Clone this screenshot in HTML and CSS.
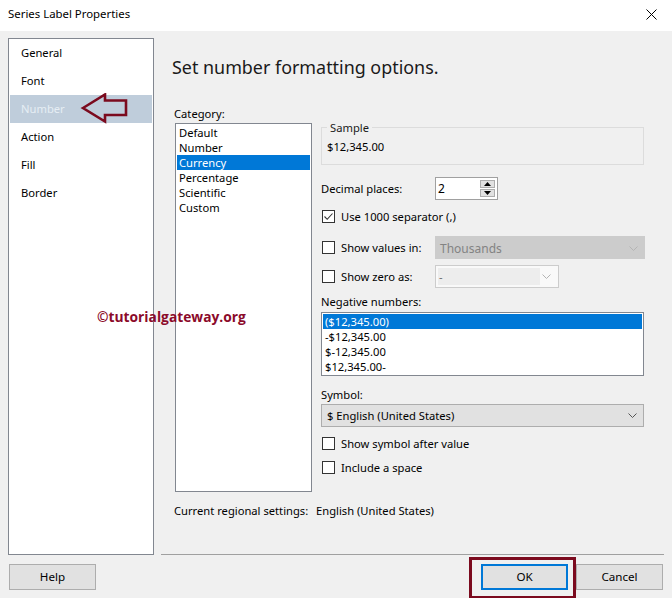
FILE: index.html
```html
<!DOCTYPE html>
<html>
<head>
<meta charset="utf-8">
<link rel="stylesheet" href="styles.css">
</head>
<body>
<div class="window">
  <div class="titlebar">
    <span class="title">Series Label Properties</span>
    <svg class="close" width="11" height="11" viewBox="0 0 11 11"><path d="M0.5 0.5 L10.5 10.5 M10.5 0.5 L0.5 10.5" stroke="#000" stroke-width="1" fill="none"/></svg>
  </div>
  <div class="client">
    <div class="main">
      <nav class="nav">
        <div class="nav-item">General</div>
        <div class="nav-item">Font</div>
        <div class="nav-item selected">Number</div>
        <div class="nav-item">Action</div>
        <div class="nav-item">Fill</div>
        <div class="nav-item">Border</div>
      </nav>
      <section class="page">
        <h1 class="heading">Set number formatting options.</h1>
        <div class="cols">
          <div class="cat-col">
            <div class="lbl">Category:</div>
            <ul class="listbox cat-list">
              <li>Default</li>
              <li>Number</li>
              <li class="sel">Currency</li>
              <li>Percentage</li>
              <li>Scientific</li>
              <li>Custom</li>
            </ul>
          </div>
          <div class="opt-col">
            <fieldset class="sample">
              <legend>Sample</legend>
              <div class="sample-val">$12,345.00</div>
            </fieldset>
            <div class="row dec-row">
              <span class="row-lbl">Decimal places:</span>
              <div class="spin">
                <span class="spin-val">2</span>
                <div class="spin-btns">
                  <div class="spin-btn"><svg width="7" height="4" viewBox="0 0 7 4"><path d="M0 4 L3.5 0 L7 4 Z" fill="#000"/></svg></div>
                  <div class="spin-btn"><svg width="7" height="4" viewBox="0 0 7 4"><path d="M0 0 L7 0 L3.5 4 Z" fill="#000"/></svg></div>
                </div>
              </div>
            </div>
            <div class="row chk-row sep-row">
              <span class="chk"><svg width="11" height="11" viewBox="0 0 11 11"><path d="M1.5 5.5 L4.2 8.3 L9.5 2.5" stroke="#333" stroke-width="1.1" fill="none"/></svg></span>
              <span>Use 1000 separator (,)</span>
            </div>
            <div class="row combo-row vals-row">
              <span class="row-lbl chk-lbl"><span class="chk"></span><span>Show values in:</span></span>
              <div class="combo disabled wide">
                <span>Thousands</span>
                <svg class="chev" width="9" height="5" viewBox="0 0 9 5"><path d="M0.5 0.5 L4.5 4.5 L8.5 0.5" stroke="#b4b4b4" fill="none"/></svg>
              </div>
            </div>
            <div class="row combo-row zero-row">
              <span class="row-lbl chk-lbl"><span class="chk"></span><span>Show zero as:</span></span>
              <div class="combo editable">
                <span class="edit-area">-</span>
                <svg class="chev" width="9" height="5" viewBox="0 0 9 5"><path d="M0.5 0.5 L4.5 4.5 L8.5 0.5" stroke="#b4b4b4" fill="none"/></svg>
              </div>
            </div>
            <div class="lbl neg-lbl">Negative numbers:</div>
            <ul class="listbox neg-list">
              <li class="sel">($12,345.00)</li>
              <li>-$12,345.00</li>
              <li>$-12,345.00</li>
              <li>$12,345.00-</li>
            </ul>
            <div class="lbl sym-lbl">Symbol:</div>
            <div class="combo symbol">
              <span>$ English (United States)</span>
              <svg class="chev" width="9" height="5" viewBox="0 0 9 5"><path d="M0.5 0.5 L4.5 4.5 L8.5 0.5" stroke="#555" fill="none"/></svg>
            </div>
            <div class="row chk-row after-row">
              <span class="chk"></span>
              <span>Show symbol after value</span>
            </div>
            <div class="row chk-row space-row">
              <span class="chk"></span>
              <span>Include a space</span>
            </div>
          </div>
        </div>
        <div class="regional">
          <span class="reg-lbl">Current regional settings:</span>
          <span>English (United States)</span>
        </div>
      </section>
    </div>
    <div class="footer">
      <button class="btn help">Help</button>
      <div class="footer-right">
        <button class="btn ok">OK</button>
        <button class="btn cancel">Cancel</button>
      </div>
      <div class="ok-mark"></div>
    </div>
  </div>
  <svg class="arrow" width="50" height="34" viewBox="0 0 50 34">
    <path d="M3 15 L25 1.5 L25 7.5 L46 7.5 L46 22 L25 22 L25 28.5 Z" fill="none" stroke="#7b0a1e" stroke-width="2.6" stroke-linejoin="miter"/>
  </svg>
  <div class="watermark">©tutorialgateway.org</div>
</div>
</body>
</html>
```
FILE: styles.css
```css
* { box-sizing: border-box; }
html, body { margin: 0; padding: 0; }
body {
  font-family: "Noto Sans", "Open Sans", sans-serif;
  font-size: 11.2px;
  color: #000;
  background: #f0f0f0;
}
.window {
  position: relative;
  width: 672px;
  height: 598px;
  overflow: hidden;
}
.titlebar {
  height: 31px;
  background: #fff;
  display: flex;
  justify-content: space-between;
  align-items: flex-start;
  padding: 6px 15px 0 8px;
  line-height: 16px;
}
.title { font-size: 11.4px; }
.close { margin-top: 3px; }
.client {
  height: 567px;
  background: #f0f0f0;
  position: relative;
}
.main {
  display: flex;
  padding: 7px 0 0 8px;
}
.nav {
  width: 146px;
  height: 517px;
  background: #fff;
  border: 1px solid #828790;
  padding: 0 1px;
}
.nav-item {
  height: 28px;
  line-height: 28px;
  padding-left: 11px;
}
.nav-item.selected {
  background: #bfcddb;
  color: #e6edf4;
}
.page {
  margin-left: 7px;
  width: 503px;
  height: 517px;
  border-bottom: 1px solid #a0a0a0;
  display: flex;
  flex-direction: column;
}
.heading {
  margin: 17px 0 0 11px;
  font-size: 17.9px;
  font-weight: normal;
  line-height: 24px;
  height: 24px;
  color: #1a1a1a;
}
.cols {
  display: flex;
  margin-top: 27px;
  padding-left: 13px;
}
.lbl { line-height: 15px; height: 15px; }
.cat-col { width: 137px; }
.listbox {
  list-style: none;
  margin: 0;
  background: #fff;
  border: 1px solid #828790;
  padding: 1px;
}
.listbox li {
  height: 15px;
  line-height: 15px;
  padding-left: 2px;
  white-space: nowrap;
}
.listbox li.sel {
  background: #0078d7;
  color: #fff;
}
.cat-list {
  margin: 2px 0 0 1px;
  width: 137px;
  height: 369px;
}
.opt-col {
  margin-left: 10px;
  width: 324px;
  display: flex;
  flex-direction: column;
}
.sample {
  margin: 14px 0 0 0;
  width: 323px;
  border: 1px solid #dcdcdc;
  padding: 0 0 10px 5px;
  min-inline-size: 0;
}
.sample legend {
  padding: 0 3px;
  line-height: 15px;
  color: #1a1a1a;
}
.sample-val {
  margin-top: 4px;
  line-height: 15px;
  height: 15px;
}
.row {
  display: flex;
  align-items: center;
}
.row-lbl { width: 114px; }
.dec-row { margin-top: 12px; height: 23px; }
.spin {
  width: 63px;
  height: 23px;
  background: #fff;
  border: 1px solid #a0a0a0;
  display: flex;
  align-items: center;
  justify-content: space-between;
  padding: 0 2px 0 2px;
  font-size: 12px;
}
.spin-btns {
  display: flex;
  flex-direction: column;
  gap: 1px;
}
.spin-btn {
  width: 15px;
  height: 8px;
  background: #e1e1e1;
  border: 1px solid #adadad;
  display: flex;
  align-items: center;
  justify-content: center;
}
.chk {
  width: 13px;
  height: 13px;
  border: 1px solid #333;
  background: #fff;
  display: inline-flex;
  align-items: center;
  justify-content: center;
  flex: none;
}
.chk-row { height: 13px; gap: 6px; margin-left: 1px; }
.chk-lbl { display: flex; align-items: center; gap: 6px; padding-left: 1px; }
.sep-row { margin-top: 10px; }
.combo-row { height: 23px; }
.vals-row { margin-top: 13px; }
.zero-row { margin-top: 6px; }
.combo {
  height: 23px;
  display: flex;
  align-items: center;
  justify-content: space-between;
  padding: 0 6px 0 4px;
}
.combo.disabled {
  width: 210px;
  background: #cccccc;
  border: 1px solid #cccccc;
  color: #838383;
  font-size: 12px;
  padding-top: 1px;
}
.combo.editable {
  width: 124px;
  background: #f9f9f9;
  border: 1px solid #cccccc;
  padding: 2px 7px 2px 2px;
}
.edit-area {
  width: 102px;
  height: 17px;
  background: #ededed;
  line-height: 17px;
  padding-left: 1px;
  color: #6d6d6d;
}
.neg-lbl { margin-top: 6px; }
.neg-list {
  margin: 3px 0 0 0;
  width: 323px;
  height: 64px;
}
.sym-lbl { margin-top: 11px; }
.combo.symbol {
  margin: 2px 0 0 0;
  width: 323px;
  background: #e1e1e1;
  border: 1px solid #adadad;
  padding: 0 6px 0 5px;
}
.after-row { margin-top: 10px; }
.space-row { margin-top: 11px; }
.regional {
  margin: 11px 0 0 13px;
  line-height: 15px;
  display: flex;
}
.reg-lbl { width: 142px; }
.footer {
  position: relative;
  display: flex;
  justify-content: space-between;
  padding: 9px 9px 0 9px;
}
.footer-right { display: flex; gap: 8px; }
.btn {
  font-family: inherit;
  font-size: 11.6px;
  color: #000;
  width: 87px;
  height: 26px;
  background: #e1e1e1;
  border: 1px solid #adadad;
  padding: 0 0 2px 0;
  margin: 0;
}
.btn.ok { border: 2px solid #0078d7; }
.ok-mark {
  position: absolute;
  left: 469px;
  top: 2px;
  width: 107px;
  height: 42px;
  border: 3px solid #7b0a1e;
}
.arrow {
  position: absolute;
  left: 80px;
  top: 93px;
}
.watermark {
  position: absolute;
  left: 97px;
  top: 307px;
  font-family: "Open Sans", "Noto Sans", sans-serif;
  font-weight: bold;
  font-size: 13.8px;
  line-height: 20px;
  color: #8b0a2a;
}
```
